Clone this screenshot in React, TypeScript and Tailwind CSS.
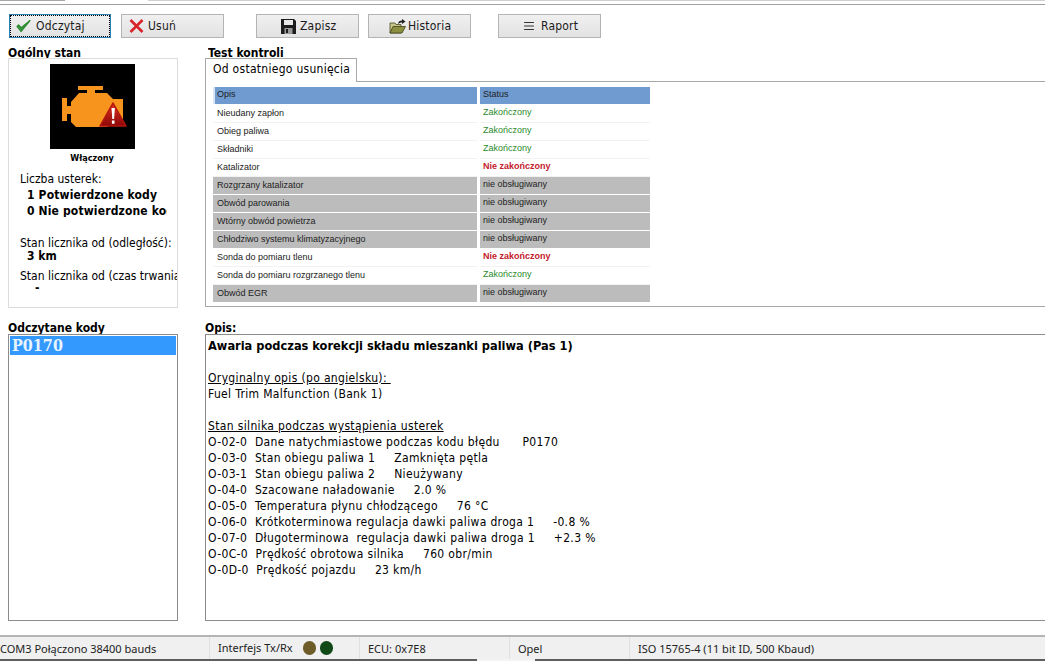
import { AlignJustify } from 'lucide-react';

const tests = [
  { name: 'Nieudany zapłon', status: 'ok' },
  { name: 'Obieg paliwa', status: 'ok' },
  { name: 'Składniki', status: 'ok' },
  { name: 'Katalizator', status: 'bad' },
  { name: 'Rozgrzany katalizator', status: 'na' },
  { name: 'Obwód parowania', status: 'na' },
  { name: 'Wtórny obwód powietrza', status: 'na' },
  { name: 'Chłodziwo systemu klimatyzacyjnego', status: 'na' },
  { name: 'Sonda do pomiaru tlenu', status: 'bad' },
  { name: 'Sonda do pomiaru rozgrzanego tlenu', status: 'ok' },
  { name: 'Obwód EGR', status: 'na' },
];

const freezeFrame = [
  'O-02-0  Dane natychmiastowe podczas kodu błędu      P0170',
  'O-03-0  Stan obiegu paliwa 1     Zamknięta pętla',
  'O-03-1  Stan obiegu paliwa 2     Nieużywany',
  'O-04-0  Szacowane naładowanie     2.0 %',
  'O-05-0  Temperatura płynu chłodzącego     76 °C',
  'O-06-0  Krótkoterminowa regulacja dawki paliwa droga 1     -0.8 %',
  'O-07-0  Długoterminowa  regulacja dawki paliwa droga 1     +2.3 %',
  'O-0C-0  Prędkość obrotowa silnika     760 obr/min',
  'O-0D-0  Prędkość pojazdu     23 km/h',
];

function EngineIcon() {
  return (
    <svg viewBox="0 0 85 85" className="w-[85px] h-[85px] bg-black block">
      <defs>
        <linearGradient id="warn" x1="0" y1="0" x2="0" y2="1">
          <stop offset="0" stopColor="#e0301f" />
          <stop offset="1" stopColor="#8c0808" />
        </linearGradient>
      </defs>
      <g fill="#f7941d">
        <rect x="28" y="22" width="25" height="4" />
        <rect x="37" y="26" width="8" height="4" />
        <path d="M21 38 L29 29 H57 L63 35 H73 V60 H60 L57 63 H26 L21 58 Z" />
        <rect x="12" y="34" width="5" height="23" />
        <rect x="17" y="42" width="5" height="8" />
      </g>
      <path d="M63 39 L50 62 h26 z" fill="url(#warn)" stroke="#b3160f" strokeWidth="1.5" strokeLinejoin="round" />
      <path d="M61.5 44h3.4l-.8 11h-1.8z M61.9 56.5h2.6v3.2h-2.6z" fill="#fff" />
    </svg>
  );
}

function FloppyIcon() {
  return (
    <svg viewBox="0 0 15 15" className="w-[15px] h-[15px]">
      <path d="M0 0h13l2 2v13H0z" fill="#1c1c1c" />
      <rect x="3" y="1" width="9" height="5" fill="#e8e8e8" />
      <rect x="3.5" y="9" width="8" height="6" fill="#9a9a9a" />
      <rect x="5" y="10" width="2" height="4" fill="#1c1c1c" />
    </svg>
  );
}

function OpenFolderIcon() {
  return (
    <svg viewBox="0 0 17 15" className="w-[17px] h-[15px]">
      <path d="M1 4h5l1 1.5h5V14H1z" fill="#c9c48a" stroke="#4a4a22" strokeWidth="0.8" />
      <path d="M1 14 L4 7.5h12.5L13 14z" fill="#8c9040" stroke="#3f3f1a" strokeWidth="0.8" />
      <path d="M9 5 C9 2.5 11 1.5 13 1.5 V0 L16.5 2.5 L13 5 V3.5 C11.5 3.5 10.5 4 9 5z" fill="#222" />
    </svg>
  );
}

function CheckIcon() {
  return (
    <svg viewBox="0 0 15 14" className="w-[15px] h-[14px]">
      <path d="M1 7.5 L5 12.5 L14 1.5 L5.2 8.6 L2.6 6z" fill="#3a9a3a" stroke="#2c8a34" strokeWidth="1.2" strokeLinejoin="round" />
    </svg>
  );
}

function CrossIcon() {
  return (
    <svg viewBox="0 0 15 14" className="w-[15px] h-[14px]">
      <path d="M1.5 1 L13.5 13 M13.5 1 L1.5 13" stroke="#d8232a" strokeWidth="2.6" />
    </svg>
  );
}

function ToolButton({ icon, label, className, focused }: { icon: React.ReactNode; label: string; className: string; focused?: boolean }) {
  return (
    <button
      className={`h-[24px] flex items-center bg-gradient-to-b from-[#f0f0f0] to-[#e2e2e2] border text-[#1a1a1a] ${
        focused ? 'border-[#2a7fb8] outline-1 outline-dotted outline-black -outline-offset-2' : 'border-[#b4b4b4]'
      } ${className}`}
    >
      {icon}
      <span className="leading-[27px] tracking-[0.2px]">{label}</span>
    </button>
  );
}

export default function App() {
  return (
    <div className="w-[1045px] h-[661px] overflow-hidden flex flex-col bg-white text-black font-['DejaVu_Sans',sans-serif] [font-stretch:condensed] text-[12px]">
      {/* strip left from the tabs above */}
      <div className="h-[5px] shrink-0 border-b border-[#a0a0a0]">
        <div className="flex h-px">
          <div className="w-[65px] bg-[#a8a8a8]" />
          <div className="w-[83px]" />
          <div className="flex-1 bg-[#d0d0d0]" />
        </div>
      </div>

      {/* toolbar */}
      <div className="h-[24px] mt-[9px] flex shrink-0 pl-[9px]">
        <ToolButton focused label="Odczytaj" className="w-[102px] pl-[6px] gap-[5px]" icon={<CheckIcon />} />
        <ToolButton label="Usuń" className="w-[103px] ml-[10px] pl-[7px] gap-[4px]" icon={<CrossIcon />} />
        <ToolButton label="Zapisz" className="w-[103px] ml-[32px] pl-[24px] gap-[4px]" icon={<FloppyIcon />} />
        <ToolButton label="Historia" className="w-[103px] ml-[9px] pl-[20px] gap-[2px]" icon={<OpenFolderIcon />} />
        <ToolButton label="Raport" className="w-[103px] ml-[27px] pl-[24px] gap-[6px]" icon={<AlignJustify size={12} className="text-[#333]" />} />
      </div>

      {/* upper panels */}
      <div className="flex h-[262px] mt-[8px] shrink-0 pl-[8px]">
        <div className="w-[170px] flex flex-col">
          <div className="h-[12px] leading-[15px] font-bold overflow-hidden">Ogólny stan</div>
          <div className="h-[250px] border border-[#dcdcdc] flex flex-col overflow-hidden">
            <div className="flex justify-center mt-[5px] pr-[2px]">
              <EngineIcon />
            </div>
            <div className="text-center text-[9px] font-bold mt-[3px] leading-[12px] pr-[2px]">Włączony</div>
            <div className="pl-[11px] mt-[7px] whitespace-nowrap">
              <div className="h-[16px] leading-[16px]">Liczba usterek:</div>
              <div className="pl-[7px] font-bold h-[16px] leading-[16px] tracking-[0.15px]">1 Potwierdzone kody</div>
              <div className="pl-[7px] font-bold h-[14px] leading-[16px] w-[147px] overflow-hidden tracking-[0.15px]">0 Nie potwierdzone kody</div>
              <div className="mt-[19px] h-[13px] leading-[15px]">Stan licznika od (odległość):</div>
              <div className="pl-[7px] font-bold h-[15px] leading-[15px]">3 km</div>
              <div className="mt-[5px] h-[12px] leading-[15px]">Stan licznika od (czas trwania)</div>
              <div className="pl-[15px] font-bold h-[15px] leading-[15px]">-</div>
            </div>
          </div>
        </div>

        <div className="ml-[27px] flex-1 flex flex-col min-w-0">
          <div className="h-[12px] leading-[15px] font-bold overflow-hidden ml-[3px]">Test kontroli</div>
          <div className="h-[24px] w-[152px] border border-b-0 border-[#a8a8a8] pl-[7px] leading-[21px] bg-white relative z-10 -mb-px tracking-[0.28px]">
            Od ostatniego usunięcia
          </div>
          <div className="h-[226px] border border-r-0 border-[#a8a8a8] pl-[7px] pt-[5px] font-['Liberation_Sans',sans-serif] [font-stretch:normal] text-[9px] text-[#222]">
            <div className="flex h-[17px] mb-px">
              <div className="w-[264px] bg-[#6f9bd1] pl-[2px] leading-[14px] border-l-2 border-[#d8e6f5]">Opis</div>
              <div className="w-[170px] ml-[3px] bg-[#6f9bd1] pl-[3px] leading-[14px]">Status</div>
            </div>
            {tests.map((t) => (
              <div key={t.name} className="flex h-[18px]">
                <div className={`w-[264px] pl-[4px] leading-[17px] ${t.status === 'na' ? 'bg-[#bcbcbc] border-b border-white' : 'border-b border-[#f2f2f2]'}`}>
                  {t.name}
                </div>
                <div
                  className={`w-[170px] ml-[3px] pl-[3px] leading-[15px] ${
                    t.status === 'na'
                      ? 'bg-[#bcbcbc] border-b border-white'
                      : t.status === 'ok'
                        ? 'text-[#2b8a2b] border-b border-[#f2f2f2]'
                        : 'text-[#c4202c] font-bold border-b border-[#f2f2f2]'
                  }`}
                >
                  {t.status === 'ok' ? 'Zakończony' : t.status === 'bad' ? 'Nie zakończony' : 'nie obsługiwany'}
                </div>
              </div>
            ))}
          </div>
        </div>
      </div>

      {/* codes + description */}
      <div className="flex h-[300px] mt-[13px] shrink-0 pl-[8px]">
        <div className="w-[170px] flex flex-col">
          <div className="h-[13px] leading-[15px] font-bold">Odczytane kody</div>
          <div className="flex-1 border border-[#8c8c8c] p-px">
            <div className="h-[19px] bg-[#3399ff] text-[#e8f4ff] font-bold text-[16px] leading-[19px] pl-[2px] font-['DejaVu_Serif',serif]">P0170</div>
          </div>
        </div>
        <div className="ml-[27px] flex-1 flex flex-col min-w-0">
          <div className="h-[13px] leading-[15px] font-bold">Opis:</div>
          <div className="flex-1 border border-r-0 border-[#8c8c8c] pl-[2px] pt-[3px] leading-[16px] whitespace-pre tracking-[0.35px]">
            <div className="font-bold text-[12.7px] h-[16px] tracking-normal">Awaria podczas korekcji składu mieszanki paliwa (Pas 1)</div>
            <div className="h-[16px]" />
            <div className="underline h-[16px]">Oryginalny opis (po angielsku): </div>
            <div className="h-[16px]">Fuel Trim Malfunction (Bank 1)</div>
            <div className="h-[16px]" />
            <div className="underline h-[16px]">Stan silnika podczas wystąpienia usterek</div>
            {freezeFrame.map((line) => (
              <div key={line} className="h-[16px]">{line}</div>
            ))}
          </div>
        </div>
      </div>

      {/* status bar */}
      <div className="h-[24px] mt-[14px] shrink-0 flex border-t-2 border-[#b4b4b4] bg-[#f0f0f0] font-['Noto_Sans',sans-serif] [font-stretch:normal] text-[11px] text-[#222] leading-[24px]">
        <div className="w-[210px] whitespace-nowrap border-r border-[#e0e0e0] overflow-hidden">COM3 Połączono 38400 bauds</div>
        <div className="w-[150px] pl-[8px] flex items-center border-r border-[#e0e0e0]">
          Interfejs Tx/Rx
          <span className="ml-[10px] w-[13px] h-[14px] rounded-full bg-[#6e5b2a]" />
          <span className="ml-[4px] w-[13px] h-[14px] rounded-full bg-[#0f4a17]" />
        </div>
        <div className="w-[150px] pl-[8px] border-r border-[#e0e0e0]">ECU: 0x7E8</div>
        <div className="w-[120px] pl-[8px] border-r border-[#e0e0e0]">Opel</div>
        <div className="flex-1 pl-[8px]">ISO 15765-4 (11 bit ID, 500 Kbaud)</div>
      </div>

      {/* taskbar edge */}
      <div className="flex-1 flex bg-[#5e5e5e]">
        <div className="w-[477px]" />
        <div className="w-[58px] bg-[#f4f4f4]" />
      </div>
    </div>
  );
}
